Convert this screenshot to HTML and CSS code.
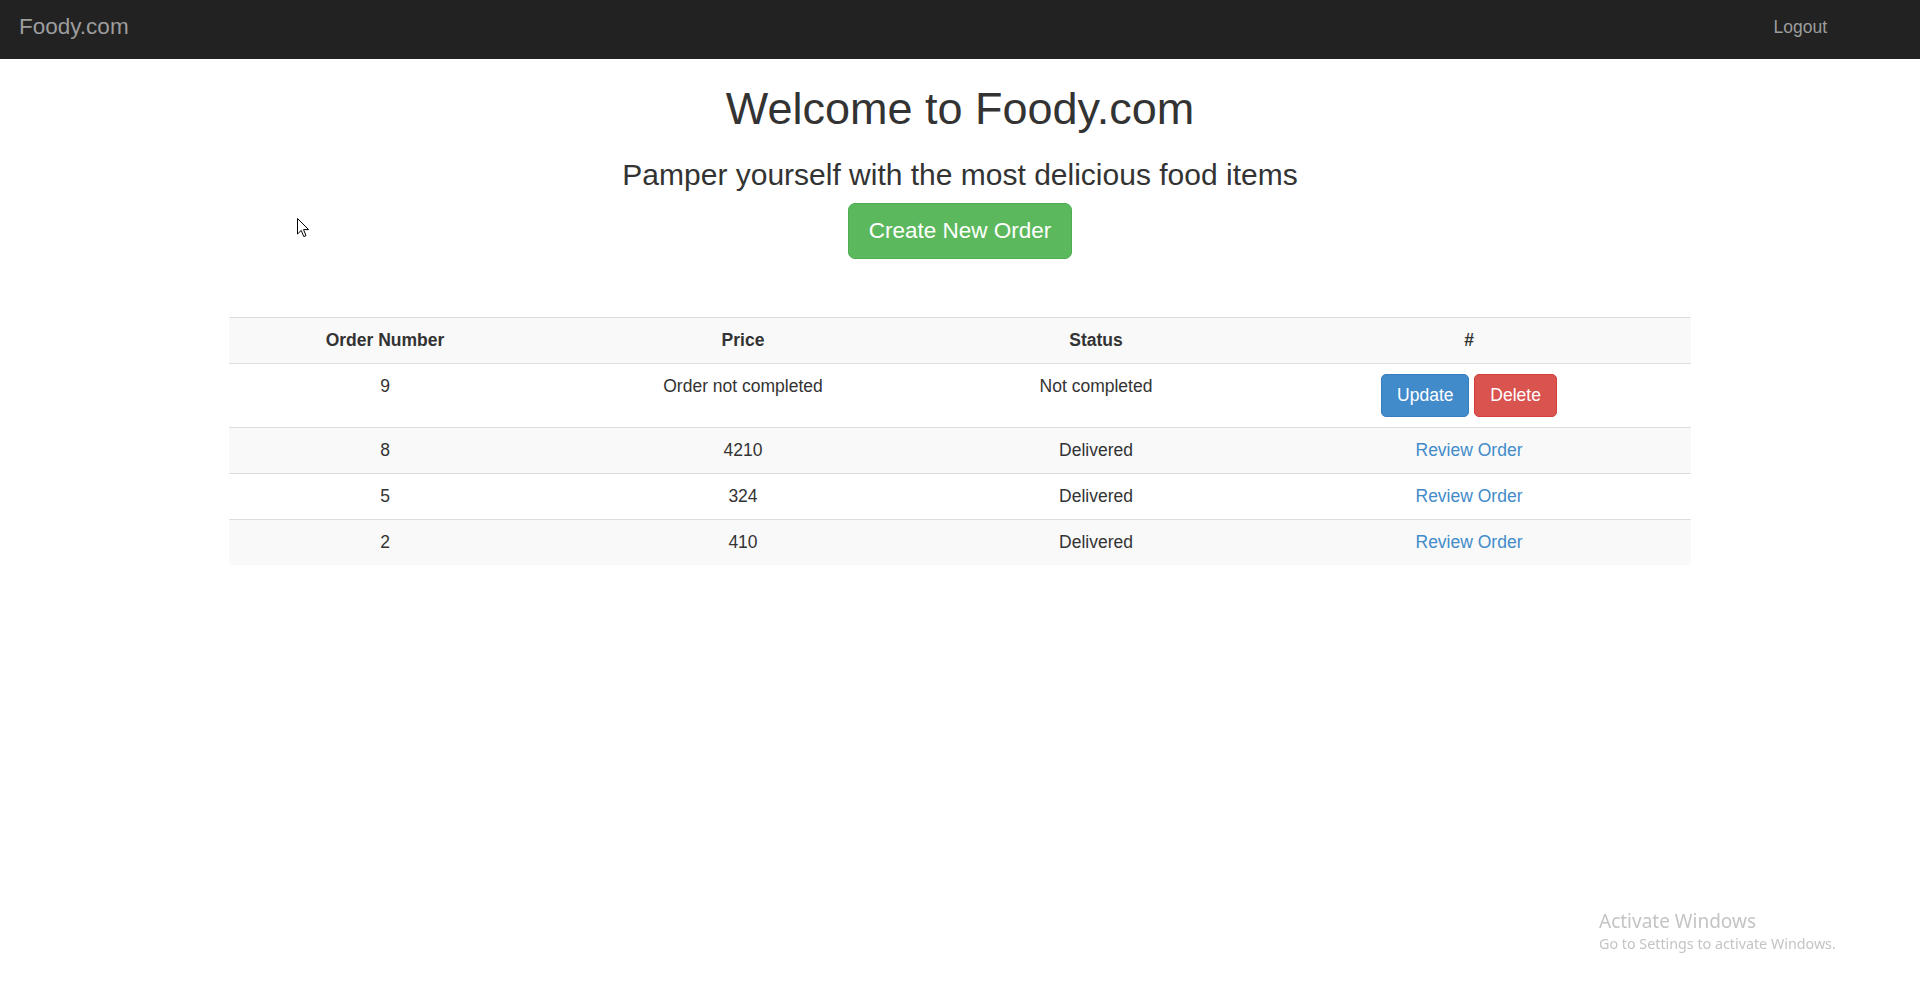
FILE: index.html
```html
<!DOCTYPE html>
<html lang="en">
<head>
<meta charset="utf-8">
<title>Foody.com</title>
<link rel="stylesheet" href="styles.css">
</head>
<body>
<nav class="navbar">
  <a class="brand" href="#">Foody.com</a>
  <a class="nav-link" href="#">Logout</a>
</nav>
<main class="main">
  <section class="hero">
    <h1 class="title">Welcome to Foody.com</h1>
    <h3 class="subtitle">Pamper yourself with the most delicious food items</h3>
    <a class="btn btn-lg btn-success" href="#">Create New Order</a>
  </section>
  <table class="orders">
    <colgroup>
      <col class="c1"><col class="c2"><col class="c3"><col class="c4">
    </colgroup>
    <tbody>
      <tr class="stripe">
        <th>Order Number</th><th>Price</th><th>Status</th><th>#</th>
      </tr>
      <tr>
        <td>9</td><td>Order not completed</td><td>Not completed</td>
        <td><a class="btn btn-primary" href="#">Update</a> <a class="btn btn-danger" href="#">Delete</a></td>
      </tr>
      <tr class="stripe">
        <td>8</td><td>4210</td><td>Delivered</td><td><a class="link" href="#">Review Order</a></td>
      </tr>
      <tr>
        <td>5</td><td>324</td><td>Delivered</td><td><a class="link" href="#">Review Order</a></td>
      </tr>
      <tr class="stripe">
        <td>2</td><td>410</td><td>Delivered</td><td><a class="link" href="#">Review Order</a></td>
      </tr>
    </tbody>
  </table>
</main>
<div class="cursor">
  <svg width="13" height="20" viewBox="0 0 13 20"><path d="M0.5 0.5 L0.5 16 L4.2 12.4 L6.8 18.6 L9 17.6 L6.5 11.6 L11.6 11.6 Z" fill="#fff" stroke="#000" stroke-width="1" stroke-linejoin="miter"/></svg>
</div>
<div class="watermark">
  <div class="wm-title">Activate Windows</div>
  <div class="wm-sub">Go to Settings to activate Windows.</div>
</div>
</body>
</html>
```
FILE: styles.css
```css
* { box-sizing: border-box; }
html, body { margin: 0; padding: 0; }
body {
  font-family: "Liberation Sans", Arial, Helvetica, sans-serif;
  font-size: 17.5px;
  line-height: 25px;
  color: #333;
  background: #fff;
}
a { text-decoration: none; }

.navbar {
  height: 59px;
  background: #222;
  display: flex;
  align-items: center;
  justify-content: space-between;
  padding: 0 93px 0 19px;
}
.brand {
  color: #9d9d9d;
  font-size: 22.5px;
  line-height: 25px;
  margin-top: -6px;
}
.nav-link {
  color: #9d9d9d;
  font-size: 17.5px;
  line-height: 25px;
  margin-top: -5px;
}

.hero {
  text-align: center;
  padding-top: 25px;
}
.title {
  margin: 0;
  font-size: 45px;
  line-height: 50px;
  font-weight: 500;
  color: #333;
}
.subtitle {
  margin: 24px 0 12px;
  font-size: 30px;
  line-height: 33px;
  font-weight: 500;
  color: #333;
}

.btn {
  display: inline-block;
  color: #fff;
  border: 1px solid transparent;
  border-radius: 5px;
  padding: 8px 15px;
  font-size: 17.5px;
  line-height: 25px;
  vertical-align: middle;
}
.btn-lg {
  font-size: 22.5px;
  line-height: 30px;
  padding: 12px 20px;
  border-radius: 7px;
}
.btn-success { background: #5cb85c; border-color: #4cae4c; }
.btn-primary { background: #428bca; border-color: #357ebd; }
.btn-danger { background: #d9534f; border-color: #d43f3a; }

.orders {
  width: 1462px;
  margin: 58px auto 0;
  border-collapse: collapse;
  border-spacing: 0;
}
.c1 { width: 312px; }
.c2 { width: 404px; }
.c3 { width: 302px; }
.c4 { width: 444px; }
.orders th, .orders td {
  padding: 10px;
  text-align: center;
  vertical-align: top;
  border-top: 1px solid #ddd;
  line-height: 25px;
}
.orders th { font-weight: 700; }
.stripe { background: #f9f9f9; }
.link { color: #428bca; }

.cursor {
  position: absolute;
  left: 297px;
  top: 218px;
  line-height: 0;
}

.watermark {
  position: fixed;
  left: 1599px;
  top: 908px;
  color: #c4c4c4;
  font-family: "Noto Sans", "Open Sans", sans-serif;
}
.wm-title { font-size: 19px; line-height: 26px; }
.wm-sub { font-size: 14.3px; line-height: 20px; }
```
